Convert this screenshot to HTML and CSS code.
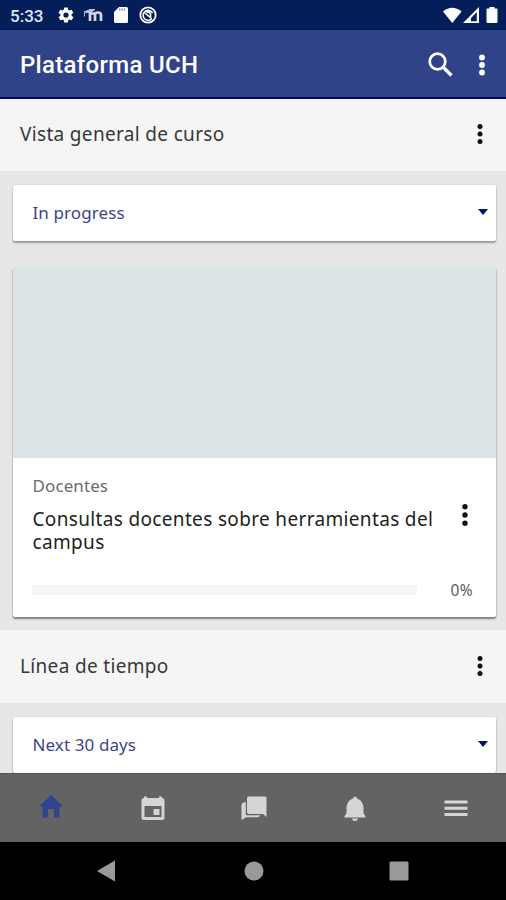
FILE: index.html
```html
<!DOCTYPE html>
<html lang="es">
<head>
<meta charset="utf-8">
<title>Plataforma UCH</title>
<link rel="stylesheet" href="styles.css">
</head>
<body>
<div class="app">
  <div class="status">
    <span class="clock">5:33</span>
    <svg class="gear" width="18" height="18" viewBox="0 0 24 24"><path fill-rule="evenodd" d="M19.400 13a7.500 7.500 0 0 0 0-2l2.100-1.600a.5.5 0 0 0 .1-.7l-2-3.400a.5.5 0 0 0-.6-.2l-2.500 1a7.300 7.300 0 0 0-1.700-1l-.4-2.600a.5.5 0 0 0-.5-.5h-4a.5.5 0 0 0-.5.5L9 5.100a7.300 7.300 0 0 0-1.700 1l-2.500-1a.5.5 0 0 0-.6.2l-2 3.400a.5.5 0 0 0 .1.700L4.500 11a7.500 7.500 0 0 0 0 2l-2.100 1.600a.5.5 0 0 0-.1.700l2 3.400c.1.200.4.300.6.200l2.500-1a7.300 7.300 0 0 0 1.700 1l.4 2.600c0 .3.200.5.500.5h4c.3 0 .5-.2.5-.5l.4-2.600a7.300 7.300 0 0 0 1.700-1l2.500 1c.2.100.5 0 .6-.2l2-3.400a.5.5 0 0 0-.1-.7zM12 8.500a3.500 3.500 0 1 1 0 7 3.500 3.500 0 0 1 0-7z"/></svg>
    <svg class="moodle" width="20" height="16" viewBox="0 0 20 16"><path d="M1 5 7 2.500h5L7 6zM1.500 5.500v4" fill="#b9c0d3" stroke="#b9c0d3"/><path d="M7 14V5M6 6.500h6M12 14V7.500Q12 5.500 15 5.500t3 2.500v6" fill="none" stroke="#d5d8e2" stroke-width="2.700"/></svg>
    <svg class="sd" width="14" height="16" viewBox="0 0 14 16"><path d="M5 0h7.500Q14 0 14 1.500v13q0 1.500-1.500 1.500h-11Q0 16 0 14.500V5z"/><path d="M5 2.500h7" fill="none" stroke="#8790ad" stroke-width="2" stroke-dasharray="1.400 1"/></svg>
    <svg class="sync" width="18" height="18" viewBox="0 0 18 18"><g fill="none" stroke="#fff"><circle cx="9" cy="9" r="7.700" stroke-width="1.800"/><path d="M13 12.500A5 5 0 1 1 13.500 7M6 7l6.500 5.500M7.500 6.200q3-1 4 1.800v3" stroke-width="1.600"/></g></svg>
    <svg class="signals" width="55" height="18" viewBox="0 0 55 18"><path d="M0 4.500Q9.300-3 18.600 4.500L9.300 16z"/><path fill-rule="evenodd" d="M20 16 36 0v16zm8-1.700h5.800V5L28 11z"/><path d="M44.500 1.500h2V0h5v1.500h2q1 0 1 1V15q0 1-1 1h-9q-1 0-1-1V2.500q0-1 1-1z"/></svg>
  </div>
  <header class="toolbar">
    <h1>Plataforma UCH</h1>
    <svg class="search" width="25" height="25" viewBox="0 0 25 25"><circle cx="9.500" cy="9.500" r="7.800" fill="none" stroke="#fff" stroke-width="2.700"/><path d="m15 15 8.500 8.500" stroke="#fff" stroke-width="3.300"/></svg>
    <svg class="dots light" width="8" height="22" viewBox="0 0 8 22"><circle cx="4" cy="3.500" r="2.900"/><circle cx="4" cy="11" r="2.900"/><circle cx="4" cy="18.500" r="2.900"/></svg>
  </header>
  <main>
    <section class="heading first"><h2>Vista general de curso</h2><svg class="dots" width="8" height="22" viewBox="0 0 8 22"><circle cx="4" cy="3.500" r="2.500"/><circle cx="4" cy="11" r="2.500"/><circle cx="4" cy="18.500" r="2.500"/></svg></section>
    <div class="select"><span>In progress</span><i class="caret"></i></div>
    <article class="course">
      <div class="cover"></div>
      <p class="category">Docentes</p>
      <div class="title"><h3>Consultas docentes sobre herramientas del campus</h3><svg class="dots" width="8" height="24" viewBox="0 0 8 24"><circle cx="4" cy="3.700" r="2.700"/><circle cx="4" cy="12" r="2.700"/><circle cx="4" cy="20.300" r="2.700"/></svg></div>
      <div class="progress"><div class="track"></div><span>0%</span></div>
    </article>
    <section class="heading second"><h2>Línea de tiempo</h2><svg class="dots" width="8" height="22" viewBox="0 0 8 22"><circle cx="4" cy="3.500" r="2.500"/><circle cx="4" cy="11" r="2.500"/><circle cx="4" cy="18.500" r="2.500"/></svg></section>
    <div class="select"><span>Next 30 days</span><i class="caret"></i></div>
  </main>
  <nav class="tabs">
    <div><svg class="home" width="24" height="24" viewBox="0 0 24 24"><path d="M12 0 23 10.500 22 12h-1.500v10.500H15V15q0-1-1-1h-4q-1 0-1 1v7.500H3.500V12H2l-1-1.500z"/></svg></div>
    <div><svg width="24" height="26" viewBox="0 0 24 26"><path fill-rule="evenodd" d="M3 2V.5h3V2h12V.5h3V2q2.500 0 2.500 3v16.500q0 2.500-2.500 2.500H3Q.5 24 .5 21.500V5Q.5 2 3 2zm.5 8v11h17V10z"/><path d="M12.500 13h6v6h-6z"/></svg></div>
    <div><svg width="26" height="26" viewBox="0 0 26 26"><path d="M8 .5h16q1.500 0 1.500 1.500v19L22 18H8q-2 0-2-2V2.500Q6 .5 8 .5z"/><path d="M4.800 6v13.300h14.700q-1 2-3 2H5l-4.500 3V9q0-2.500 4.300-3z"/></svg></div>
    <div><svg width="22" height="26" viewBox="0 0 22 26"><path d="M11 .5q1.500 0 2 2Q19 4.500 19.500 12v5.500l2 2.500v1.500H.5V20l2-2.500V12Q3 4.500 9 2.500q.5-2 2-2zM8 22.500h6q-.5 2.500-3 2.500t-3-2.500z"/></svg></div>
    <div><svg width="24" height="24" viewBox="0 0 24 24"><path d="M.5 3.500h23v3H.5zm0 6.300h23v3H.5zm0 6.200h23v3H.5z"/></svg></div>
  </nav>
  <div class="system">
    <svg width="18" height="22" viewBox="0 0 18 22"><path d="M18 .5v21L0 11z"/></svg>
    <svg class="circle" width="20" height="20" viewBox="0 0 20 20"><circle cx="10" cy="10" r="9.500"/></svg>
    <svg width="20" height="20" viewBox="0 0 20 20"><rect x=".5" y=".5" width="19" height="19" rx="1.500"/></svg>
  </div>
</div>
</body>
</html>
```
FILE: styles.css
```css
* { box-sizing: border-box; }
body, h1, h2, h3, p { margin: 0; }
body { background: #e7e7e7; font-family: "Noto Sans", sans-serif; }
svg { display: block; flex: none; }
.app { width: 506px; height: 900px; display: flex; flex-direction: column; overflow: hidden; }
.status { height: 30px; flex: none; background: #041e5a; display: flex; align-items: center; fill: #fff; padding: 0 8px 0 10px; }
.clock { width: 47px; flex: none; color: #dfe5f2; font: 500 17px/30px Roboto, sans-serif; padding-top: 2px; }
.moodle { margin-left: 8px; }
.sd { margin-left: 11px; }
.sync { margin-left: 11px; }
.signals { margin-left: auto; margin-top: 2px; }
.toolbar { height: 69px; flex: none; background: #304288; border-bottom: 2px solid #00067a; display: flex; align-items: center; padding: 2px 20px 0 20px; box-shadow: 0 1px 4px #0003; }
h1 { font: 500 24px/32px Roboto, sans-serif; letter-spacing: .3px; color: #fff; flex: 1; }
.toolbar .dots { margin: 0 0 0 25px; }
.dots { fill: #111; }
.light { fill: #fff; }
main { flex: 1; min-height: 0; overflow: hidden; }
.heading { display: flex; justify-content: space-between; background: #f5f5f5; padding: 0 22px 0 20px; }
.heading h2 { font-size: 19px; letter-spacing: .33px; font-weight: 400; line-height: 26px; color: #383838; }
.first { height: 72px; padding-top: 22px; }
.second { height: 73px; padding-top: 23px; margin-top: 13px; }
.heading .dots { margin-top: 2px; }
.select { height: 56px; margin: 14px 10px 0 13px; background: #fff; border-radius: 2px; box-shadow: 0 2px 2px #0005, 0 0 2px #0002; padding: 0 8px 2px 19.5px; display: flex; align-items: center; justify-content: space-between; color: #3c458c; font-size: 17px; letter-spacing: .1px; }
.caret { width: 0; height: 0; border: 5.5px solid transparent; border-top: 6px solid #071071; border-bottom: 0; }
.course { height: 350px; margin: 26px 10px 0 13px; background: #fff; border-radius: 2px; box-shadow: 0 2px 2px #0006, 0 1px 2px #0002; overflow: hidden; }
.cover { height: 191px; background: #dde4e7; }
.category { padding: 16px 20px 0 19.5px; color: #6b6b6b; font-size: 17px; line-height: 24px; letter-spacing: .1px; }
.title { display: flex; justify-content: space-between; padding: 10px 27px 0 19.5px; }
h3 { width: 410px; font-size: 19px; letter-spacing: .34px; font-weight: 400; line-height: 23px; color: #222; }
.title .dots { margin-top: -5px; }
.progress { display: flex; align-items: center; justify-content: space-between; margin: 24px 23px 0 19px; height: 24px; }
.track { width: 385px; height: 10px; background: #f5f5f5; }
.progress span { font-size: 15.5px; letter-spacing: .4px; color: #5c5c5c; }
.tabs { height: 69px; flex: none; background: #636363; border-top: 1px solid #555; display: grid; grid-template-columns: repeat(5, 1fr); align-items: center; justify-items: center; fill: #d5d5d5; padding: 1px 0 0 2px; }
.home { fill: #304590; margin: -3px 2px 0 0; }
.system { height: 58px; flex: none; background: #000; fill: #999; display: flex; align-items: center; justify-content: space-between; padding: 0 97px; }
.circle { margin-left: 3px; }
```
